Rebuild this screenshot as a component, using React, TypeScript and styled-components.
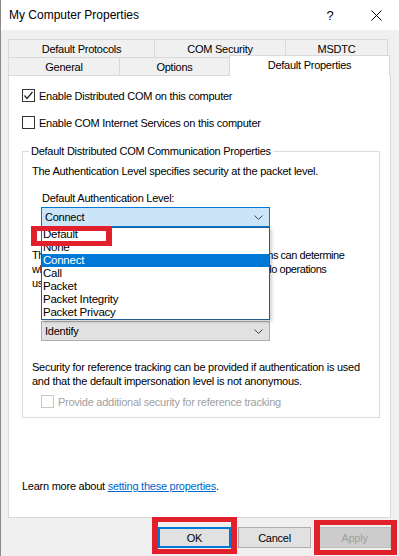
import React from 'react';
import styled, { createGlobalStyle } from 'styled-components';

const GlobalStyle = createGlobalStyle`
  html, body {
    margin: 0;
    padding: 0;
    background: #f0f0f0;
  }
  body {
    font-family: "Liberation Sans", Arial, sans-serif;
    font-size: 11px;
    letter-spacing: -0.25px;
    color: #000;
  }
`;

const Window = styled.div`
  position: relative;
  width: 399px;
  height: 556px;
  box-sizing: border-box;
  display: flex;
  flex-direction: column;
  background: #f0f0f0;
  border-left: 1px solid #8a8a8a;
  overflow: hidden;
`;

const TitleBar = styled.div`
  height: 30px;
  flex-shrink: 0;
  display: flex;
  align-items: center;
  background: #fff;
  padding-left: 8px;
`;

const Title = styled.div`
  flex: 1;
  font-size: 12px;
  letter-spacing: 0;
`;

const TitleButton = styled.div`
  width: 46px;
  height: 30px;
  display: flex;
  align-items: center;
  justify-content: center;
  font-size: 13px;
`;

const Body = styled.div`
  flex: 1;
  display: flex;
  flex-direction: column;
  padding: 9px 8px 0 7px;
`;

const TabRow = styled.div<{ $top?: boolean }>`
  display: flex;
  height: 18px;
  padding-left: 1px;
  position: relative;
  z-index: ${(p) => (p.$top ? 0 : 1)};
`;

const Tab = styled.div<{ $w: number; $active?: boolean }>`
  width: ${(p) => p.$w}px;
  box-sizing: border-box;
  border: 1px solid #d9d9d9;
  border-bottom: none;
  margin-left: -1px;
  display: flex;
  align-items: center;
  justify-content: center;
  background: ${(p) => (p.$active ? '#fff' : '#f0f0f0')};
  ${(p) =>
    p.$active &&
    `
    height: 21px;
    margin-top: -2px;
    padding-bottom: 3px;
  `}
`;

const Panel = styled.div`
  height: 443px;
  box-sizing: border-box;
  background: #fff;
  border: 1px solid #d9d9d9;
  display: flex;
  flex-direction: column;
  padding: 13px 10px 24px 13px;
`;

const CheckRow = styled.label<{ $disabled?: boolean; $mb?: number }>`
  display: flex;
  align-items: center;
  height: 13px;
  gap: 4px;
  white-space: nowrap;
  color: ${(p) => (p.$disabled ? '#a0a0a0' : '#000')};
  margin-bottom: ${(p) => p.$mb || 0}px;
`;

const Box = styled.span<{ $disabled?: boolean }>`
  width: 13px;
  height: 13px;
  flex-shrink: 0;
  box-sizing: border-box;
  border: 1px solid ${(p) => (p.$disabled ? '#c8c8c8' : '#333')};
  background: #fff;
  display: flex;
  align-items: center;
  justify-content: center;
`;

const Group = styled.fieldset`
  margin: 1px 0 0 0;
  padding: 0 10px 9px 9px;
  border: 1px solid #dcdcdc;
  min-width: 0;
  display: flex;
  flex-direction: column;
`;

const Legend = styled.legend`
  padding: 0 2px;
  margin-left: -3px;
  line-height: 14px;
`;

const Text = styled.div<{ $mt: number; $indent?: number; $tight?: boolean }>`
  line-height: 14px;
  margin-top: ${(p) => p.$mt}px;
  padding-left: ${(p) => p.$indent || 0}px;
  white-space: nowrap;
  ${(p) => p.$tight && 'letter-spacing: -0.45px;'}
`;

const SelectWrap = styled.div<{ $mt: number }>`
  position: relative;
  margin-top: ${(p) => p.$mt}px;
  margin-left: 9px;
  width: 229px;
`;

const Select = styled.div<{ $focused?: boolean }>`
  height: 20px;
  box-sizing: border-box;
  border: 1px solid ${(p) => (p.$focused ? '#0078d7' : '#adadad')};
  background: ${(p) => (p.$focused ? '#cce4f7' : '#e1e1e1')};
  display: flex;
  align-items: center;
  justify-content: space-between;
  padding: 0 6px 0 3px;
`;

const List = styled.div`
  position: absolute;
  top: 100%;
  left: 0;
  width: 229px;
  box-sizing: border-box;
  border: 1px solid #245c94;
  background: #fff;
  box-shadow: 2px 2px 3px rgba(0, 0, 0, 0.18);
  z-index: 5;
`;

const Option = styled.div<{ $selected?: boolean }>`
  height: 13px;
  line-height: 13px;
  padding-left: 1px;
  font-size: 11.5px;
  background: ${(p) => (p.$selected ? '#0078d7' : '#fff')};
  color: ${(p) => (p.$selected ? '#fff' : '#000')};
`;

const Marker = styled.div`
  position: absolute;
  box-sizing: border-box;
  border-style: solid;
  border-color: #e2202b;
  border-width: 5px 6px;
  pointer-events: none;
  z-index: 10;
`;

const DefaultMarker = styled(Marker)`
  left: -11px;
  top: -2px;
  width: 81px;
  height: 20px;
`;

const DisabledRow = styled.div`
  margin-top: 7px;
  margin-left: 9px;
`;

const Learn = styled.div`
  margin-top: auto;
  line-height: 14px;
`;

const LinkText = styled.a`
  color: #0066cc;
  text-decoration: underline;
`;

const ButtonRow = styled.div`
  display: flex;
  justify-content: flex-end;
  gap: 7px;
  margin-top: 9px;
`;

const Button = styled.div<{ $default?: boolean; $disabled?: boolean }>`
  position: relative;
  width: 73px;
  height: 21px;
  box-sizing: border-box;
  display: flex;
  align-items: center;
  justify-content: center;
  background: ${(p) => (p.$disabled ? '#cccccc' : '#e1e1e1')};
  color: ${(p) => (p.$disabled ? '#a0a0a0' : '#000')};
  border: ${(p) => (p.$default ? '2px solid #0078d7' : p.$disabled ? '1px solid #bfbfbf' : '1px solid #adadad')};
`;

const OkMarker = styled(Marker)`
  left: -8px;
  right: -8px;
  top: -12px;
  bottom: -8px;
`;

const ApplyMarker = styled(Marker)`
  left: -5px;
  right: -7px;
  top: -8px;
  bottom: -8px;
`;

const Chevron = () => (
  <svg width="9" height="5" viewBox="0 0 9 5">
    <path d="M0.5 0.5 L4.5 4.5 L8.5 0.5" fill="none" stroke="#444" strokeWidth="1" />
  </svg>
);

const Check = () => (
  <svg width="11" height="11" viewBox="0 0 11 11">
    <path d="M1.5 5.5 L4 8.5 L9.5 2" fill="none" stroke="#222" strokeWidth="1.2" />
  </svg>
);

const CloseIcon = () => (
  <svg width="11" height="11" viewBox="0 0 11 11">
    <path d="M0.5 0.5 L10.5 10.5 M10.5 0.5 L0.5 10.5" stroke="#000" strokeWidth="1" />
  </svg>
);

const levels = ['Default', 'None', 'Connect', 'Call', 'Packet', 'Packet Integrity', 'Packet Privacy'];

export default function App() {
  return (
    <Window>
      <GlobalStyle />
      <TitleBar>
        <Title>My Computer Properties</Title>
        <TitleButton>?</TitleButton>
        <TitleButton>
          <CloseIcon />
        </TitleButton>
      </TitleBar>
      <Body>
        <TabRow $top>
          <Tab $w={147}>Default Protocols</Tab>
          <Tab $w={132}>COM Security</Tab>
          <Tab $w={103}>MSDTC</Tab>
        </TabRow>
        <TabRow>
          <Tab $w={112}>General</Tab>
          <Tab $w={111}>Options</Tab>
          <Tab $w={161} $active>
            Default Properties
          </Tab>
        </TabRow>
        <Panel>
          <CheckRow $mb={14}>
            <Box>
              <Check />
            </Box>
            Enable Distributed COM on this computer
          </CheckRow>
          <CheckRow $mb={14}>
            <Box />
            Enable COM Internet Services on this computer
          </CheckRow>
          <Group>
            <Legend>Default Distributed COM Communication Properties</Legend>
            <Text $mt={6}>The Authentication Level specifies security at the packet level.</Text>
            <Text $mt={13} $indent={10}>
              Default Authentication Level:
            </Text>
            <SelectWrap $mt={2}>
              <Select $focused>
                Connect
                <Chevron />
              </Select>
              <List>
                {levels.map((l) => (
                  <Option key={l} $selected={l === 'Connect'}>
                    {l}
                  </Option>
                ))}
                <DefaultMarker />
              </List>
            </SelectWrap>
            <Text $mt={21} $tight>
              The Impersonation Level specifies whether applications can determine
              <br />
              who is calling them, and whether the application can do operations
              <br />
              using the client's identity.
            </Text>
            <SelectWrap $mt={31}>
              <Select>
                Identify
                <Chevron />
              </Select>
            </SelectWrap>
            <Text $mt={19}>
              Security for reference tracking can be provided if authentication is used
              <br />
              and that the default impersonation level is not anonymous.
            </Text>
            <DisabledRow>
              <CheckRow $disabled>
                <Box $disabled />
                Provide additional security for reference tracking
              </CheckRow>
            </DisabledRow>
          </Group>
          <Learn>
            Learn more about <LinkText>setting these properties</LinkText>.
          </Learn>
        </Panel>
        <ButtonRow>
          <Button $default>
            OK
            <OkMarker />
          </Button>
          <Button>Cancel</Button>
          <Button $disabled>
            Apply
            <ApplyMarker />
          </Button>
        </ButtonRow>
      </Body>
    </Window>
  );
}
